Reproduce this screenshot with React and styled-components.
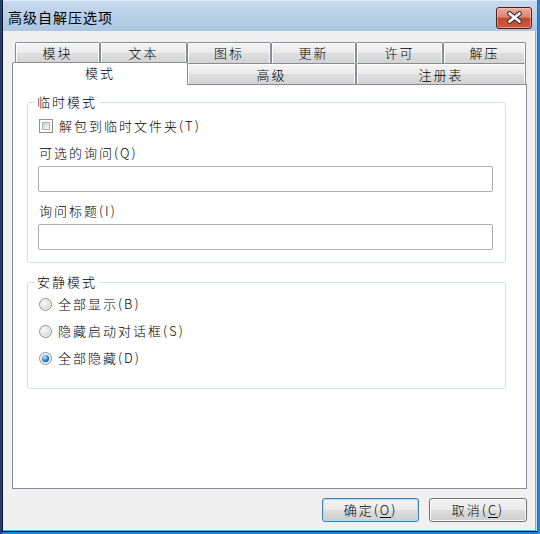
import styled, { createGlobalStyle } from "styled-components";

const GlobalStyle = createGlobalStyle`
  html, body {
    margin: 0;
    padding: 0;
  }
  body {
    width: 540px;
    height: 534px;
    overflow: hidden;
    font-family: "Noto Sans CJK SC", "Liberation Sans", sans-serif;
    font-weight: 300;
    color: #000;
  }
`;

const Desktop = styled.div`
  width: 540px;
  height: 534px;
  display: flex;
  background: linear-gradient(90deg, #23406a 0 2px, #2a7fd6 2px);
`;

const Window = styled.div`
  box-sizing: border-box;
  margin-left: 2px;
  width: 536px;
  height: 532px;
  display: flex;
  flex-direction: column;
  border-left: 1px solid #0f1824;
  border-right: 1px solid #4b6789;
  border-bottom: 1px solid #0f1824;
  background: #cddcee;
`;

const TitleBar = styled.div`
  height: 31px;
  flex: none;
  display: flex;
  align-items: center;
  justify-content: space-between;
  padding: 2px 5px 0 5px;
  box-sizing: border-box;
  border-top: 1px solid #e2ecf7;
  background: linear-gradient(#c6d9ee, #b7cfe9 55%, #abc5e2);
`;

const Title = styled.span`
  font-size: 14px;
  font-weight: 400;
  letter-spacing: 1px;
  line-height: 18px;
`;

const CloseButton = styled.div`
  box-sizing: border-box;
  width: 36px;
  height: 22px;
  margin-top: 1px;
  display: flex;
  align-items: center;
  justify-content: center;
  border: 1px solid #5b1a11;
  border-radius: 3px;
  background: linear-gradient(#eaaa98, #dd8570 45%, #c6472f 52%, #cf5b41);
  box-shadow: inset 0 0 0 1px rgba(255, 230, 220, 0.45);
`;

const Body = styled.div`
  flex: 1;
  margin-right: 1px;
  display: flex;
  flex-direction: column;
  padding: 11px 8px 0 9px;
  background: #f0f0f0;
  border-right: 1px solid #9ba7b5;
  border-bottom: 1px solid #4cc4ec;
`;

const TabRow = styled.div`
  display: flex;
  align-items: flex-start;
  height: 21px;
  padding-left: 3px;
`;

const Tab = styled.div`
  box-sizing: border-box;
  flex: none;
  width: ${(p) => p.$w}px;
  height: 21px;
  display: flex;
  align-items: center;
  justify-content: center;
  padding-top: ${(p) => (p.$low ? 2 : 0)}px;
  border: 1px solid #898c95;
  border-bottom: none;
  border-radius: 2px 2px 0 0;
  background: linear-gradient(#f4f4f4, #ebebeb 48%, #dedede 52%, #d3d3d3);
  box-shadow: inset 1px 1px 0 #fff, inset -1px 0 0 #fafafa;
  font-size: 13px;
  letter-spacing: 2px;
  line-height: 16px;
`;

const ActiveTab = styled.div`
  position: relative;
  z-index: 1;
  box-sizing: border-box;
  flex: none;
  width: ${(p) => p.$w}px;
  height: 23px;
  margin: -1px -1px 0 -3px;
  display: flex;
  justify-content: center;
  padding-top: 2px;
  border: 1px solid #898c95;
  border-bottom: none;
  border-radius: 2px 2px 0 0;
  background: #fff;
  font-size: 13px;
  letter-spacing: 2px;
  line-height: 16px;
`;

const Panel = styled.div`
  position: relative;
  box-sizing: border-box;
  height: 405px;
  padding: 9px 20px 0 14px;
  border: 1px solid #898c95;
  background: #fff;
`;

const Group = styled.fieldset`
  margin: ${(p) => p.$mt || 0}px 0 0 0;
  min-width: 0;
  padding: 0 12px ${(p) => p.$pb}px 11px;
  border: 1px solid #d5dfe5;
  border-radius: 3px;
  display: flex;
  flex-direction: column;
  align-items: flex-start;
`;

const Legend = styled.legend`
  margin-left: -4px;
  padding: 0 2px;
  height: 16px;
  font-size: 13px;
  letter-spacing: 2px;
  line-height: 16px;
`;

const Row = styled.label`
  display: flex;
  align-items: center;
  height: 16px;
  margin-top: ${(p) => p.$mt}px;
  gap: 6px;
  font-size: 13px;
  letter-spacing: 2px;
  line-height: 16px;
  white-space: nowrap;
`;

const Caption = styled.div`
  height: 16px;
  margin-top: ${(p) => p.$mt}px;
  font-size: 13px;
  letter-spacing: 2px;
  line-height: 16px;
  white-space: nowrap;
`;

const TextBox = styled.input`
  box-sizing: border-box;
  width: 455px;
  height: 26px;
  margin: 5px 0 0 -1px;
  padding: 0 3px;
  border: 1px solid #abadb3;
  border-radius: 2px;
  background: #fff;
  outline: none;
  font: inherit;
`;

const CheckBox = styled.span`
  box-sizing: border-box;
  flex: none;
  width: 14px;
  height: 14px;
  padding: 2px;
  border: 1px solid #8e8f8f;
  background: #fff;
  &::after {
    content: "";
    display: block;
    box-sizing: border-box;
    width: 8px;
    height: 8px;
    border: 1px solid #aeb3b9;
    background: linear-gradient(135deg, #c5c9ce, #e9eaeb 60%, #f7f7f7);
  }
`;

const Radio = styled.span`
  position: relative;
  box-sizing: border-box;
  flex: none;
  width: 13px;
  height: 13px;
  border-radius: 50%;
  border: 1px solid #8f9194;
  background: radial-gradient(circle at 40% 38%, #fbfbfb 0, #e3e3e3 45%, #c4c4c4 100%);
  box-shadow: inset 0 0 0 1px #f4f4f4;
  &::after {
    content: "";
    display: ${(p) => (p.$on ? "block" : "none")};
    position: absolute;
    left: 2px;
    top: 2px;
    width: 7px;
    height: 7px;
    border-radius: 50%;
    background: radial-gradient(circle at 40% 35%, #d6f0ff 0, #5db4f2 28%, #1a67bf 62%, #0b3a7a 100%);
  }
`;

const ButtonBar = styled.div`
  display: flex;
  justify-content: flex-end;
  gap: 10px;
  margin-top: 9px;
`;

const Button = styled.button`
  box-sizing: border-box;
  width: ${(p) => p.$w}px;
  height: 24px;
  padding: 0;
  border: 1px solid ${(p) => (p.$focus ? "#3c7fb1" : "#707070")};
  border-radius: 3px;
  background: linear-gradient(#f2f2f2, #ebebeb 48%, #dddddd 52%, #cfcfcf);
  box-shadow: inset 0 0 0 1px ${(p) => (p.$focus ? "#a8e2fb" : "#fcfcfc")};
  font-family: inherit;
  font-weight: 300;
  font-size: 13px;
  letter-spacing: 2px;
  line-height: 16px;
  color: #000;
  u {
    text-decoration: underline;
    text-underline-offset: 2px;
  }
`;

const rowOne = [
  ["模块", 85],
  ["文本", 87],
  ["图标", 84],
  ["更新", 85],
  ["许可", 87],
  ["解压", 83],
];

const CloseIcon = () => (
  <svg width="17" height="13" viewBox="0 0 17 13">
    <path d="M3.5 2.5 L13.5 10.5 M13.5 2.5 L3.5 10.5" stroke="#3d3d3d" strokeWidth="5" strokeLinecap="round" />
    <path d="M3.5 2.5 L13.5 10.5 M13.5 2.5 L3.5 10.5" stroke="#fff" strokeWidth="2.6" strokeLinecap="round" />
  </svg>
);

export default function App() {
  return (
    <>
      <GlobalStyle />
      <Desktop>
        <Window>
          <TitleBar>
            <Title>高级自解压选项</Title>
            <CloseButton>
              <CloseIcon />
            </CloseButton>
          </TitleBar>
          <Body>
            <TabRow>
              {rowOne.map(([name, w]) => (
                <Tab key={name} $w={w}>
                  {name}
                </Tab>
              ))}
            </TabRow>
            <TabRow>
              <ActiveTab $w={176}>模式</ActiveTab>
              <Tab $w={169} $low>
                高级
              </Tab>
              <Tab $w={170} $low>
                注册表
              </Tab>
            </TabRow>
            <Panel>
              <Group $pb={12}>
                <Legend>临时模式</Legend>
                <Row $mt={8}>
                  <CheckBox />
                  解包到临时文件夹(T)
                </Row>
                <Caption $mt={11}>可选的询问(Q)</Caption>
                <TextBox />
                <Caption $mt={11}>询问标题(I)</Caption>
                <TextBox />
              </Group>
              <Group $mt={11} $pb={22}>
                <Legend>安静模式</Legend>
                <Row $mt={6}>
                  <Radio />
                  全部显示(B)
                </Row>
                <Row $mt={11}>
                  <Radio />
                  隐藏启动对话框(S)
                </Row>
                <Row $mt={11}>
                  <Radio $on />
                  全部隐藏(D)
                </Row>
              </Group>
            </Panel>
            <ButtonBar>
              <Button $w={97} $focus>
                确定(<u>O</u>)
              </Button>
              <Button $w={98}>
                取消(<u>C</u>)
              </Button>
            </ButtonBar>
          </Body>
        </Window>
      </Desktop>
    </>
  );
}
